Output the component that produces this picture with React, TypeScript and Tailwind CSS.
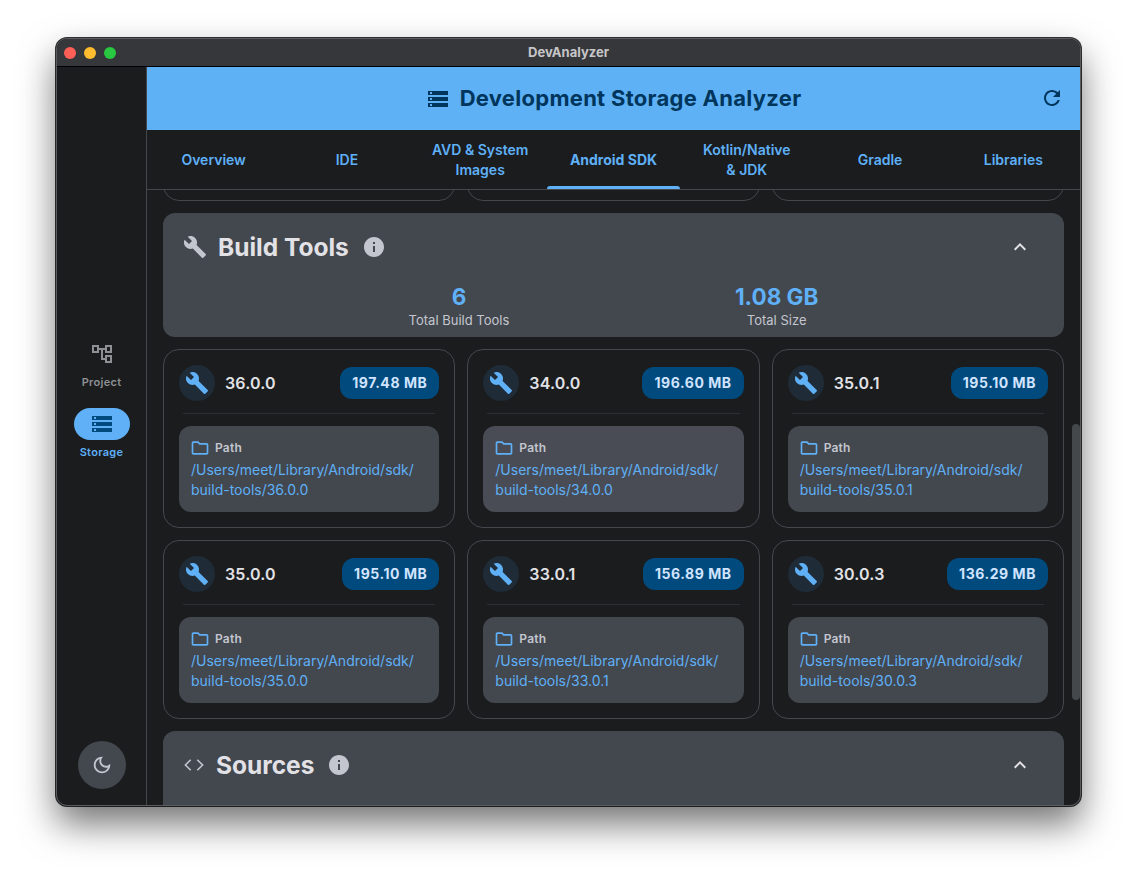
const BUILD = "M22.7 19l-9.1-9.1c.9-2.3.4-5-1.5-6.9-2-2-5-2.4-7.4-1.3L9 6 6 9 1.6 4.7C.4 7.1.9 10.1 2.9 12.1c1.9 1.9 4.6 2.4 6.9 1.5l9.1 9.1c.4.4 1 .4 1.4 0l2.3-2.3c.5-.4.5-1.1.1-1.4z";
const STORAGE = "M2 20h20v-4H2v4zm2-3h2v2H4v-2zM2 4v4h20V4H2zm4 3H4V5h2v2zm-4 7h20v-4H2v4zm2-3h2v2H4v-2z";
const INFO = "M12 2C6.48 2 2 6.48 2 12s4.48 10 10 10 10-4.48 10-10S17.52 2 12 2zm1 15h-2v-6h2v6zm0-8h-2V7h2v2z";
const REFRESH = "M17.65 6.35C16.2 4.9 14.21 4 12 4c-4.42 0-7.99 3.58-7.99 8s3.57 8 7.99 8c3.73 0 6.84-2.55 7.73-6h-2.08c-.82 2.33-3.04 4-5.65 4-3.31 0-6-2.69-6-6s2.69-6 6-6c1.66 0 3.14.69 4.22 1.78L13 11h7V4l-2.35 2.35z";
const FOLDER = "M9.17 6l2 2H20v10H4V6h5.17M10 4H4c-1.1 0-1.99.9-1.99 2L2 18c0 1.1.9 2 2 2h16c1.1 0 2-.9 2-2V8c0-1.1-.9-2-2-2h-8l-2-2z";
const CHEVRON_UP = "M12 8l-6 6 1.41 1.41L12 10.83l4.59 4.58L18 14z";
const MOON = "M9.37 5.51C9.19 6.15 9.1 6.82 9.1 7.5c0 4.08 3.32 7.4 7.4 7.4.68 0 1.35-.09 1.99-.27C17.45 17.19 14.93 19 12 19c-3.86 0-7-3.14-7-7 0-2.93 1.81-5.45 4.37-6.49zM12 3c-4.97 0-9 4.03-9 9s4.03 9 9 9 9-4.03 9-9c0-.46-.04-.92-.1-1.36-.98 1.37-2.58 2.26-4.4 2.26-2.98 0-5.4-2.42-5.4-5.4 0-1.81.89-3.42 2.26-4.4C12.92 3.04 12.46 3 12 3z";
const TREE = "M22 11V3h-7v3H9V3H2v8h7V8h2v10h4v3h7v-8h-7v3h-2V8h2v3h7zM7 9H4V5h3v4zm10 6h3v4h-3v-4zm0-10h3v4h-3V5z";

function Icon({ d, className }: { d: string; className?: string }) {
  return (
    <svg viewBox="0 0 24 24" fill="currentColor" className={className}>
      <path d={d} />
    </svg>
  );
}

const tabs = ["Overview", "IDE", "AVD & System Images", "Android SDK", "Kotlin/Native & JDK", "Gradle", "Libraries"];

const tools = [
  { version: "36.0.0", size: "197.48 MB" },
  { version: "34.0.0", size: "196.60 MB", hover: true },
  { version: "35.0.1", size: "195.10 MB" },
  { version: "35.0.0", size: "195.10 MB" },
  { version: "33.0.1", size: "156.89 MB" },
  { version: "30.0.3", size: "136.29 MB" },
];

function ToolCard({ version, size, hover }: { version: string; size: string; hover?: boolean }) {
  return (
    <div className="h-[179px] rounded-2xl border border-[#44474c] p-[15px]">
      <div className="flex h-9 items-center justify-between">
        <div className="flex items-center gap-2.5">
          <div className="flex h-9 w-9 items-center justify-center rounded-full bg-[#1f2c37]">
            <Icon d={BUILD} className="h-6 w-6 text-[#5fb0f6]" />
          </div>
          <span className="text-base font-semibold tracking-[0.15px] text-[#e2e2e6]">{version}</span>
        </div>
        <span className="flex h-8 items-center rounded-xl bg-[#004a7d] px-3 text-sm font-bold tracking-[0.55px] text-[#d1e4ff]">{size}</span>
      </div>
      <div className="mx-1 mt-3 h-px bg-[#2c2f33]" />
      <div className={`mt-3 h-[86px] rounded-xl px-3 pt-[13px] ${hover ? "bg-[#494c54]" : "bg-[#43474e]"}`}>
        <div className="flex h-[18px] items-center gap-[5px]">
          <Icon d={FOLDER} className="-ml-px h-5 w-5 text-[#5fb0f6]" />
          <span className="text-xs font-semibold tracking-[0.2px] text-[#c3c6cf]">Path</span>
        </div>
        <div className="mt-[3px] text-sm leading-5 text-[#5fb0f6]">
          /Users/meet/Library/Android/sdk/
          <br />
          build-tools/{version}
        </div>
      </div>
    </div>
  );
}

function SectionHead({ title, children }: { title: string; children: React.ReactNode }) {
  return (
    <div className="flex h-7 items-center">
      {children}
      <span className="ml-[11px] pt-px text-[24.5px] font-bold text-[#e2e2e6]">{title}</span>
      <Icon d={INFO} className="ml-[13px] h-6 w-6 text-[#c3c6cf]" />
      <Icon d={CHEVRON_UP} className="ml-auto mr-3 h-6 w-6 text-[#e2e2e6]" />
    </div>
  );
}

function Stat({ value, label }: { value: string; label: string }) {
  return (
    <div className="flex flex-col items-center">
      <span className="text-[22.5px] font-bold leading-[26px] text-[#5fb0f6]">{value}</span>
      <span className="mt-[2px] text-[13px] leading-4 text-[#c3c6cf]">{label}</span>
    </div>
  );
}

export default function App() {
  return (
    <div className="h-[880px] w-[1136px] overflow-hidden bg-white pl-14 pt-[38px] font-['Inter',sans-serif]">
      <div className="relative flex h-[768px] w-[1025px] flex-col overflow-hidden rounded-[11px] border border-[#5a5c60] bg-[#1a1c1e] shadow-[0_0_0_1px_rgba(0,0,0,0.8),0_18px_36px_rgba(0,0,0,0.55)]">
        {/* title bar */}
        <div className="relative flex h-7 shrink-0 items-center justify-center border-b border-black bg-[#36373b]">
          <div className="absolute left-[7px] top-2 flex gap-2">
            <span className="h-3 w-3 rounded-full bg-[#ff5f57]" />
            <span className="h-3 w-3 rounded-full bg-[#febc2e]" />
            <span className="h-3 w-3 rounded-full bg-[#28c840]" />
          </div>
          <span className="text-[13px] font-bold text-[#c6c6c8]">DevAnalyzer</span>
        </div>

        <div className="flex min-h-0 flex-1">
          {/* side rail */}
          <div className="flex w-[90px] shrink-0 flex-col items-center border-r border-[#44474c]">
            <div className="flex flex-1 flex-col items-center justify-center pb-[8px]">
              <Icon d={TREE} className="h-6 w-6 text-[#8e9094]" />
              <span className="mt-[9px] text-[11px] font-semibold leading-[14px] tracking-[0.3px] text-[#8e9094]">Project</span>
              <div className="mt-[19px] flex h-8 w-14 items-center justify-center rounded-full bg-[#5fb0f6]">
                <Icon d={STORAGE} className="h-6 w-6 text-[#004a7d]" />
              </div>
              <span className="mt-[5px] text-[11px] font-semibold leading-[14px] tracking-[0.3px] text-[#5fb0f6]">Storage</span>
            </div>
            <div className="mb-4 flex h-12 w-12 items-center justify-center rounded-full bg-[#43474e]">
              <Icon d={MOON} className="h-[22px] w-[22px] text-[#c3c6cf]" />
            </div>
          </div>

          {/* main */}
          <div className="relative flex min-w-0 flex-1 flex-col">
            <div className="relative flex h-[63px] shrink-0 items-center justify-center gap-2.5 bg-[#5fb1f6]">
              <Icon d={STORAGE} className="h-6 w-6 text-[#00355c]" />
              <span className="text-[22px] font-bold tracking-[0.28px] text-[#00355c]">Development Storage Analyzer</span>
              <Icon d={REFRESH} className="absolute right-[16px] top-[19px] h-6 w-6 text-[#00355c]" />
            </div>

            <div className="grid h-[60px] shrink-0 grid-cols-7 border-b border-[#44474c]">
              {tabs.map((t) => (
                <div key={t} className={`relative flex items-center justify-center px-[17px] text-center text-sm leading-5 text-[#5fb0f6] ${t === "Android SDK" ? "font-bold" : "font-semibold"}`}>
                  {t}
                  {t === "Android SDK" && <span className="absolute inset-x-0 bottom-0 h-[3px] rounded-t-[3px] bg-[#5fb0f6]" />}
                </div>
              ))}
            </div>

            <div className="min-h-0 flex-1 overflow-hidden px-4">
              {/* row scrolled past the top edge */}
              <div className="-mt-[89px] grid grid-cols-3 gap-3">
                {[0, 1, 2].map((i) => (
                  <div key={i} className="h-[100px] rounded-2xl border border-[#44474c]" />
                ))}
              </div>

              <section className="mt-3 h-[124px] rounded-xl bg-[#43474e] px-5 pt-5">
                <SectionHead title="Build Tools">
                  <Icon d={BUILD} className="h-6 w-6 text-[#c3c6cf]" />
                </SectionHead>
                <div className="mt-[23px] flex justify-evenly">
                  <Stat value="6" label="Total Build Tools" />
                  <Stat value="1.08 GB" label="Total Size" />
                </div>
              </section>

              <div className="mt-3 grid grid-cols-3 gap-3">
                {tools.map((t) => (
                  <ToolCard key={t.version} {...t} />
                ))}
              </div>

              <section className="mt-3 h-[124px] rounded-xl bg-[#43474e] px-5 pt-5">
                <SectionHead title="Sources">
                  <svg viewBox="0 0 24 24" fill="none" stroke="currentColor" strokeWidth="1.6" className="-ml-px -mr-px h-6 w-6 text-[#c3c6cf]">
                    <path d="M8.7 6.7 3.4 12l5.3 5.3M15.3 6.7l5.3 5.3-5.3 5.3" />
                  </svg>
                </SectionHead>
              </section>
            </div>

            {/* overlay scrollbar */}
            <div className="absolute right-0 top-[357px] h-[276px] w-2 rounded bg-[#44484b]" />
          </div>
        </div>
      </div>
    </div>
  );
}
